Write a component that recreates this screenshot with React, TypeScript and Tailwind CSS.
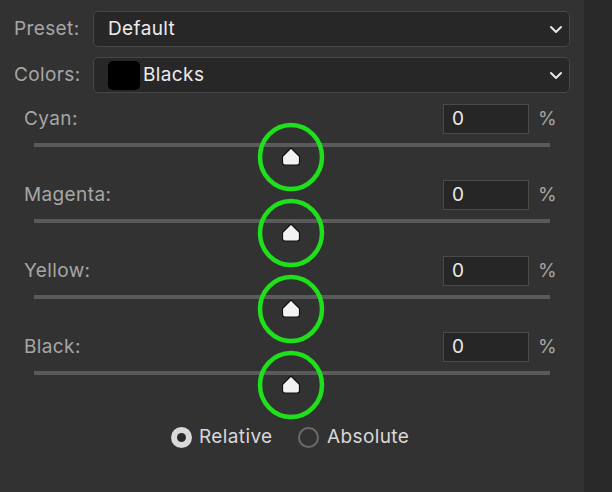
import React from "react";

const channels = ["Cyan", "Magenta", "Yellow", "Black"];

function Chevron() {
  return (
    <svg width="14" height="9" viewBox="0 0 14 9" className="shrink-0">
      <path d="M2 2 L7 7 L12 2" fill="none" stroke="#e6e6e6" strokeWidth="2" strokeLinecap="round" strokeLinejoin="round" />
    </svg>
  );
}

function Thumb() {
  return (
    <svg width="20" height="19" viewBox="0 0 20 19">
      <path
        d="M10 1 L18.5 9.5 L18.5 15.5 Q18.5 18 16 18 L4 18 Q1.5 18 1.5 15.5 L1.5 9.5 Z"
        fill="#f2f2f2"
        stroke="#111"
        strokeWidth="1.2"
        strokeLinejoin="round"
      />
    </svg>
  );
}

function SliderRow({ label }: { label: string }) {
  return (
    <div className="h-[76px] flex flex-col">
      <div className="flex items-center h-[30px]">
        <span className="pl-[24px] text-[19px] tracking-[0.02em] text-[#a6a6a6] flex-1">{label}:</span>
        <div className="w-[86px] h-[30px] bg-[#262626] border border-[#4a4a4a] flex items-center pl-[8px] text-[19px] text-[#ececec]">
          0
        </div>
        <span className="w-[55px] pl-[9px] text-[19px] text-[#a6a6a6]">%</span>
      </div>
      <div className="relative mt-[9px] ml-[34px] w-[516px] h-[4px] bg-[#5a5a5a]">
        {/* thumb */}
        <div className="absolute left-[247px] top-[4px]">
          <Thumb />
        </div>
        {/* annotation circle */}
        <svg className="absolute left-[222px] top-[-21px]" width="70" height="70" viewBox="0 0 70 70">
          <ellipse cx="35" cy="35" rx="31" ry="32" fill="none" stroke="#1fe11b" strokeWidth="4.5" />
        </svg>
      </div>
    </div>
  );
}

export default function App() {
  return (
    <div
      className="w-[612px] h-[492px] flex overflow-hidden"
      style={{ fontFamily: "Inter, 'Open Sans', sans-serif" }}
    >
      <div className="w-[584px] h-full bg-[#323232] pt-[11px]">
        {/* Preset */}
        <div className="flex items-center">
          <span className="w-[93px] pl-[14px] text-[19px] tracking-[0.02em] text-[#a6a6a6]">Preset:</span>
          <div className="w-[477px] h-[36px] rounded-[5px] bg-[#272727] border border-[#474747] flex items-center pl-[14px] pr-[6px] justify-between">
            <span className="text-[19px] tracking-[0.02em] text-[#ececec]">Default</span>
            <Chevron />
          </div>
        </div>
        {/* Colors */}
        <div className="flex items-center mt-[10px]">
          <span className="w-[93px] pl-[14px] text-[19px] tracking-[0.02em] text-[#a6a6a6]">Colors:</span>
          <div className="w-[477px] h-[36px] rounded-[5px] bg-[#272727] border border-[#474747] flex items-center pl-[14px] pr-[6px]">
            <div className="w-[32px] h-[29px] rounded-[5px] bg-black" />
            <span className="ml-[3px] text-[19px] tracking-[0.02em] text-[#ececec] flex-1">Blacks</span>
            <Chevron />
          </div>
        </div>
        {/* Sliders */}
        <div className="mt-[11px]">
          {channels.map((c) => (
            <SliderRow key={c} label={c} />
          ))}
        </div>
        {/* Radios */}
        <div className="flex items-center mt-[15px] pl-[171px]">
          <div className="w-[21px] h-[21px] rounded-full bg-[#d9d9d9] flex items-center justify-center">
            <div className="w-[9px] h-[9px] rounded-full bg-[#2a2a2a]" />
          </div>
          <span className="ml-[7px] w-[99px] text-[19px] tracking-[0.02em] text-[#d8d8d8]">Relative</span>
          <div className="w-[21px] h-[21px] rounded-full border-2 border-[#6a6a6a]" />
          <span className="ml-[8px] text-[19px] tracking-[0.02em] text-[#d8d8d8]">Absolute</span>
        </div>
      </div>
      <div className="flex-1 h-full bg-[#292929]" />
    </div>
  );
}
